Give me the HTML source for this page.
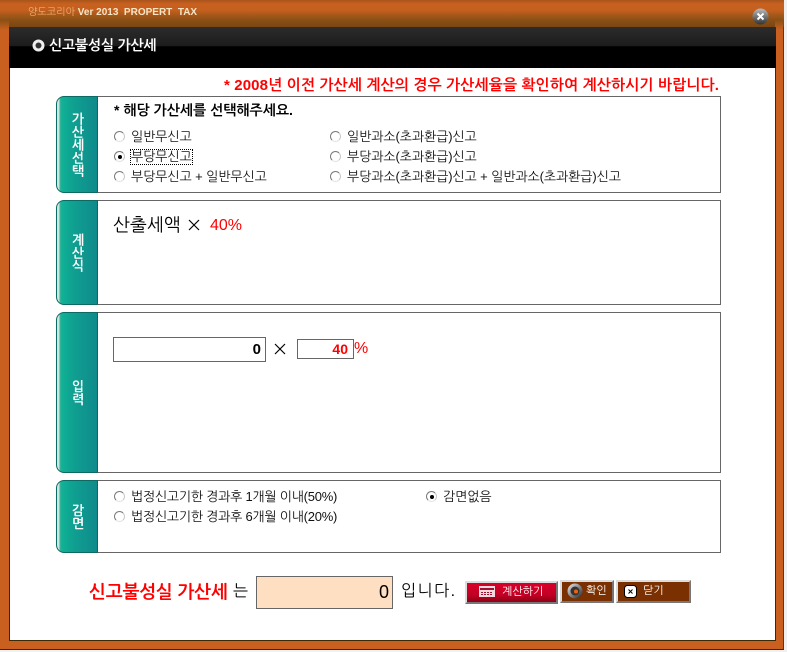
<!DOCTYPE html>
<html><head><meta charset="utf-8">
<style>
html,body{margin:0;padding:0;width:787px;height:652px;overflow:hidden;background:#f0f0f0}
body{position:relative;font-family:"Liberation Sans","NanumGothic","Noto Sans CJK KR",sans-serif;font-size:12px;color:#000}
.a{position:absolute;white-space:nowrap}
#frame{left:0;top:0;width:783px;height:649px;background:#c9601f;border-right:1px solid #5a3a10;border-bottom:1px solid #3a2a08}
#title{left:0;top:0;width:784px;height:27px;background:linear-gradient(#a8551c 0,#c9601f 4px,#c5601f 10px,#8a5015 20px,#7a4612 27px)}
#sideL{left:0;top:20px;width:9px;height:10px;background:linear-gradient(#8a5015,#c9601f)}
#sideR{left:775px;top:20px;width:8px;height:10px;background:linear-gradient(#8a5015,#c9601f)}
#inner{left:9px;top:27px;width:765px;height:613px;background:#fff;border:1px solid #3a2a08;border-top:0}
#head{left:9px;top:27px;width:767px;height:41px;background:linear-gradient(#2c2c2c 0,#1c1c1c 46%,#000 48%,#000 100%)}
.panel{position:absolute;left:97px;width:623px;border:1px solid #666;border-left:0;background:#fff;box-sizing:content-box}
.tab{position:absolute;left:56px;width:42px;box-sizing:border-box;border:1px solid #0c6a62;border-radius:8px 0 0 8px;background:linear-gradient(90deg,#c8e8e0 0,#c8e8e0 2px,#3fae9c 3px,#0fb295 5px,#0fa091 16px,#0f8a8c 40px);color:#fff;font-weight:bold;font-size:13px;line-height:13px;text-align:center;padding-left:2px}
.tab span{position:absolute;left:2px;right:0;top:50%;transform:translateY(-50%)}
.r{position:absolute;width:11px;height:11px;border-radius:50%;background:#fff;border:1px solid;border-color:#7a7a7a #c8c8c8 #e4e4e4 #7a7a7a;box-sizing:border-box}
.r.on:after{content:"";position:absolute;left:3px;top:3px;width:4px;height:4px;border-radius:50%;background:#000}
.l{position:absolute;white-space:nowrap;font-size:13px;line-height:14px;letter-spacing:-.1px;color:#111}
.btn{position:absolute;box-sizing:border-box;height:23px;border:2px solid;border-color:#ddd #777 #777 #ddd;color:#fff;font-size:11px;line-height:15px;white-space:nowrap}
.inp{position:absolute;box-sizing:border-box;border:1px solid #666;background:#fff;text-align:right;font-weight:bold;font-size:14px}
</style></head><body>
<div class="a" id="frame"></div>
<div class="a" id="title"></div>
<div class="a" id="sideL"></div>
<div class="a" id="sideR"></div>
<div class="a" id="inner"></div>
<div class="a" id="head"></div>
<div class="a" style="left:28px;top:6px;font-size:10px;line-height:14px;color:#f6e6c8;font-weight:bold"><span style="color:#f0b070;font-weight:normal">양도코리아</span> Ver 2013&nbsp; PROPERT&nbsp; TAX</div>
<svg class="a" style="left:752px;top:8px" width="17" height="17" viewBox="0 0 17 17"><defs><linearGradient id="g" x1="0" y1="0" x2="0" y2="1"><stop offset="0" stop-color="#bbb"/><stop offset="1" stop-color="#333"/></linearGradient></defs><circle cx="8.5" cy="8.5" r="8" fill="url(#g)"/><path d="M5.5 5.5L11.5 11.5M11.5 5.5L5.5 11.5" stroke="#fff" stroke-width="2"/></svg>
<svg class="a" style="left:32px;top:39px" width="13" height="13" viewBox="0 0 13 13"><circle cx="6.5" cy="6.5" r="4.5" fill="#333" stroke="#eee" stroke-width="3"/></svg>
<div class="a" style="left:49px;top:38px;color:#fff;font-weight:bold;font-size:14px;letter-spacing:-.2px;line-height:15px">신고불성실 가산세</div>
<div class="a" style="left:224px;top:78px;color:#f00;font-weight:bold;font-size:15px;letter-spacing:.12px;line-height:16px">* 2008년 이전 가산세 계산의 경우 가산세율을 확인하여 계산하시기 바랍니다.</div>

<div class="panel" style="top:96px;height:95px"></div>
<div class="tab" style="top:96px;height:97px"><span>가<br>산<br>세<br>선<br>택</span></div>
<div class="a" style="left:114px;top:103px;font-weight:bold;font-size:14px;line-height:14px;color:#000">* 해당 가산세를 선택해주세요.</div>
<div class="r" style="left:114px;top:131px"></div><div class="l" style="left:131px;top:130px">일반무신고</div>
<div class="r on" style="left:114px;top:151px"></div><div class="l" style="left:131px;top:150px;outline:1px dotted #000;outline-offset:0">부당무신고</div>
<div class="r" style="left:114px;top:171px"></div><div class="l" style="left:131px;top:170px">부당무신고 + 일반무신고</div>
<div class="r" style="left:330px;top:131px"></div><div class="l" style="left:347px;top:130px">일반과소(초과환급)신고</div>
<div class="r" style="left:330px;top:151px"></div><div class="l" style="left:347px;top:150px">부당과소(초과환급)신고</div>
<div class="r" style="left:330px;top:171px"></div><div class="l" style="left:347px;top:170px">부당과소(초과환급)신고 + 일반과소(초과환급)신고</div>

<div class="panel" style="top:200px;height:103px"></div>
<div class="tab" style="top:200px;height:105px"><span>계<br>산<br>식</span></div>
<div class="a" style="left:113px;top:216px;font-size:18px;line-height:18px">산출세액</div>
<svg class="a" style="left:188px;top:219px" width="12" height="12" viewBox="0 0 12 12"><path d="M1 1L11 11M11 1L1 11" stroke="#000" stroke-width="1.2"/></svg>
<div class="a" style="left:210px;top:217px;color:#f00;font-size:16px;line-height:18px">40%</div>

<div class="panel" style="top:312px;height:159px"></div>
<div class="tab" style="top:312px;height:161px"><span>입<br>력</span></div>
<div class="inp" style="left:113px;top:337px;width:153px;height:25px;line-height:23px;padding-right:4px;font-size:15px">0</div>
<svg class="a" style="left:274px;top:343px" width="12" height="12" viewBox="0 0 12 12"><path d="M1 1L11 11M11 1L1 11" stroke="#000" stroke-width="1.2"/></svg>
<div class="inp" style="left:297px;top:339px;width:57px;height:20px;line-height:19px;padding-right:5px;color:#f00">40</div>
<div class="a" style="left:354px;top:341px;font-size:16px;line-height:16px;color:#f00">%</div>

<div class="panel" style="top:480px;height:71px"></div>
<div class="tab" style="top:480px;height:73px"><span>감<br>면</span></div>
<div class="r" style="left:114px;top:491px"></div><div class="l" style="left:131px;top:490px;letter-spacing:-.25px">법정신고기한 경과후 1개월 이내(50%)</div>
<div class="r" style="left:114px;top:511px"></div><div class="l" style="left:131px;top:510px;letter-spacing:-.25px">법정신고기한 경과후 6개월 이내(20%)</div>
<div class="r on" style="left:426px;top:491px"></div><div class="l" style="left:443px;top:490px">감면없음</div>

<div class="a" style="left:89px;top:583px;font-size:18px;line-height:18px;color:#f00;font-weight:bold;letter-spacing:-.2px">신고불성실 가산세</div>
<div class="a" style="left:233px;top:583px;font-size:16px;line-height:18px">는</div>
<div class="inp" style="left:256px;top:576px;width:137px;height:33px;background:#ffdfc2;line-height:31px;padding-right:3px;font-size:18px;font-weight:normal">0</div>
<div class="a" style="left:401px;top:583px;font-size:16px;line-height:18px;letter-spacing:1.5px">입니다.</div>

<div class="btn" style="left:465px;top:581px;width:93px;background:linear-gradient(#d8002a,#c40024 60%,#8e0018)">
<svg style="position:absolute;left:12px;top:3px" width="16" height="11" viewBox="0 0 16 11"><rect width="16" height="11" fill="#f3d9dd"/><rect x="1" y="2" width="14" height="2" fill="#a01030"/><path d="M2 6h2v1H2zM5 6h2v1H5zM8 6h2v1H8zM11 6h2v1h-2zM2 8h2v1H2zM5 8h2v1H5zM8 8h2v1H8zM11 8h2v1h-2z" fill="#a01030"/></svg>
<span style="position:absolute;left:35px;top:2px">계산하기</span></div>
<div class="btn" style="left:560px;top:580px;width:54px;background:#7a3000">
<svg style="position:absolute;left:5px;top:1px" width="16" height="16" viewBox="0 0 16 16"><defs><linearGradient id="h" x1="0" y1="0" x2="1" y2="1"><stop offset="0" stop-color="#eee"/><stop offset="1" stop-color="#222"/></linearGradient></defs><circle cx="8" cy="8" r="7.5" fill="url(#h)"/><circle cx="8" cy="8" r="4.5" fill="#333"/><circle cx="9" cy="8.5" r="2" fill="#f06010"/></svg>
<span style="position:absolute;left:24px;top:2px">확인</span></div>
<div class="btn" style="left:616px;top:580px;width:75px;background:#7a3000">
<svg style="position:absolute;left:6px;top:3px" width="13" height="13" viewBox="0 0 13 13"><rect x=".5" y=".5" width="12" height="12" rx="3" fill="#fff" stroke="#000"/><path d="M4.5 4.5L8.5 8.5M8.5 4.5L4.5 8.5" stroke="#000"/></svg>
<span style="position:absolute;left:25px;top:2px">닫기</span></div>
</body></html>
